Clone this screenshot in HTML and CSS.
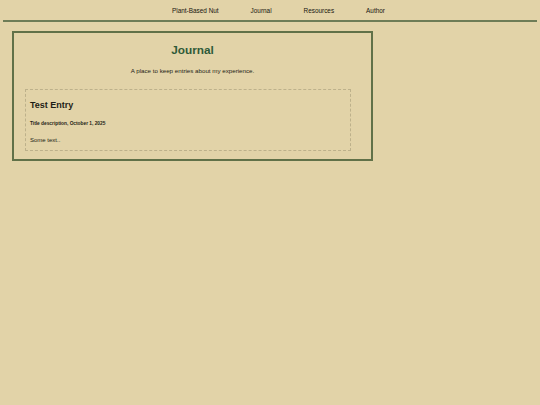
FILE: index.html
```html
<!DOCTYPE html>
<html lang="en">
<head>
<meta charset="utf-8">
<title>Journal</title>
<link rel="stylesheet" href="styles.css">
</head>
<body>
<nav class="nav">
  <a class="nav-link" href="#">Plant-Based Nut</a>
  <a class="nav-link" href="#">Journal</a>
  <a class="nav-link" href="#">Resources</a>
  <a class="nav-link" href="#">Author</a>
</nav>
<main class="panel">
  <h1 class="panel-title">Journal</h1>
  <p class="panel-sub">A place to keep entries about my experience.</p>
  <article class="entry">
    <h2 class="entry-title">Test Entry</h2>
    <h3 class="entry-meta">Title description, October 1, 2025</h3>
    <p class="entry-text">Some text..</p>
  </article>
</main>
</body>
</html>
```
FILE: styles.css
```css
html, body {
  background: #e2d3a8;
}
body {
  margin: 0;
  padding: 0 3px;
  font-family: "Liberation Sans", Arial, sans-serif;
  color: #1e1e16;
}
.nav {
  display: flex;
  justify-content: center;
  gap: 32px;
  height: 20px;
  align-items: center;
  padding-left: 17px;
  border-bottom: 2px solid #6e7c56;
}
.nav-link {
  font-size: 6.4px;
  color: #16160f;
  text-decoration: none;
}
.panel {
  margin: 9px 0 0 9px;
  width: 346px;
  border: 2px solid #617148;
  padding: 9px 0 8px 11px;
}
.panel-title {
  margin: 0;
  text-align: center;
  font-size: 11.8px;
  font-weight: bold;
  color: #2f5a38;
  line-height: 16px;
  padding-right: 11px;
}
.panel-sub {
  margin: 9px 0 0;
  text-align: center;
  font-size: 6.2px;
  line-height: 8px;
  padding-right: 11px;
}
.entry {
  margin-top: 14px;
  width: 316px;
  border: 1px dashed #bdb18b;
  padding: 7px 4px 6px 4px;
}
.entry-title {
  margin: 0;
  font-size: 9px;
  line-height: 16px;
  font-weight: bold;
}
.entry-meta {
  margin: 7px 0 0;
  font-size: 4.8px;
  line-height: 8px;
  font-weight: bold;
}
.entry-text {
  margin: 8px 0 0;
  font-size: 6px;
  line-height: 8px;
}
```
